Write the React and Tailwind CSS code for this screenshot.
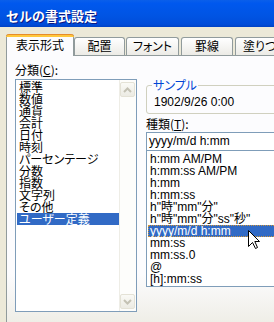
import React from "react";

const categories = [
  "標準",
  "数値",
  "通貨",
  "会計",
  "日付",
  "時刻",
  "パーセンテージ",
  "分数",
  "指数",
  "文字列",
  "その他",
  "ユーザー定義",
];

const formats = [
  "h:mm AM/PM",
  "h:mm:ss AM/PM",
  "h:mm",
  "h:mm:ss",
  'h"時"mm"分"',
  'h"時"mm"分"ss"秒"',
  "yyyy/m/d h:mm",
  "mm:ss",
  "mm:ss.0",
  "@",
  "[h]:mm:ss",
];

const ScrollButton = ({ down }) => (
  <div className="w-[15px] h-[15px] rounded-[2px] border border-[#E4E2D6] bg-gradient-to-b from-[#FAFAF6] to-[#ECEBE3] flex items-center justify-center">
    <svg width="9" height="6" viewBox="0 0 9 6" className={down ? "rotate-180" : ""}>
      <path d="M1 5 L4.5 1.5 L8 5" fill="none" stroke="#C4C2B4" strokeWidth="2" />
    </svg>
  </div>
);

const Tab = ({ label, active, className }) =>
  active ? (
    <div className={`relative z-10 -mb-[1px] h-[22px] rounded-t-[3px] border-x border-[#919B9C] bg-[#FCFCFE] ${className}`}>
      <div className="-mx-[1px] h-[3px] rounded-t-[3px] border-t border-[#E68B2C] bg-[#FFC83C]" />
      <div className="pt-[2px] text-center leading-[12px] whitespace-nowrap">{label}</div>
    </div>
  ) : (
    <div className={`h-[18px] rounded-t-[3px] border border-b-0 border-[#919B9C] bg-gradient-to-b from-white to-[#ECEBE6] ${className}`}>
      <div className="pt-[2px] leading-[12px] whitespace-nowrap">{label}</div>
    </div>
  );

const Cursor = () => (
  <svg width="13" height="20" viewBox="0 0 13 20" className="absolute left-[248px] top-[230px]">
    <path
      d="M0.5 0.5 V16.5 L4.5 12.5 L7.5 18.5 L9.5 17.5 L6.8 11.5 H11.5 Z"
      fill="white"
      stroke="black"
      strokeWidth="1"
      strokeLinejoin="miter"
    />
  </svg>
);

export default function App() {
  return (
    <div className="relative w-[274px] h-[322px] overflow-hidden bg-[#ECE9D8] text-[12px] text-black font-['Noto_Sans_CJK_JP',sans-serif]">
      {/* title bar */}
      <div className="h-[27px] pl-[6px] pt-[3px] flex items-center bg-[linear-gradient(to_bottom,#0A5FEA_0%,#0058EE_12%,#0054E3_60%,#004CD9_90%,#0042C4_100%)]">
        <span className="text-white font-bold text-[13px] leading-[13px] [text-shadow:1px_1px_0_#0A1883]">
          セルの書式設定
        </span>
      </div>

      <div className="flex h-[295px]">
        <div className="w-[3px] bg-[linear-gradient(to_right,#0831D9,#166AEE,#0855DD)]" />
        <div className="flex-1 flex flex-col pt-[7px]">
          {/* tabs */}
          <div className="flex items-end h-[21px] ml-[6px] [font-feature-settings:'palt']">
            <Tab label="表示形式" active className="w-[68px]" />
            <Tab label="配置" className="w-[51px] text-center" />
            <Tab label="フォント" className="ml-[1px] w-[53px] text-center" />
            <Tab label="罫線" className="ml-[2px] w-[52px] text-center" />
            <Tab label="塗りつぶし" className="ml-[2px] w-[70px] pl-[7px]" />
          </div>

          {/* panel */}
          <div className="flex-1 ml-[6px] flex pl-[8px] border-t border-l border-[#919B9C] bg-[linear-gradient(to_bottom,#FCFCFE_82%,#EFEEE7)]">
            {/* category column */}
            <div className="w-[122px] shrink-0">
              <div className="mt-[8px] h-[12px] leading-[12px]">
                分類(<span className="underline underline-offset-[1px]">C</span>):
              </div>
              <div className="mt-[3px] h-[233px] flex border border-[#7F9DB9] bg-white">
                <div className="flex-1 pl-[1px] pt-[1px] [font-feature-settings:'palt']">
                  {categories.map((c, i) => (
                    <div
                      key={c}
                      className={`h-[12px] leading-[12px] pl-[2px] whitespace-nowrap ${
                        i === categories.length - 1 ? "bg-[#316AC5] text-white" : ""
                      }`}
                    >
                      {c}
                    </div>
                  ))}
                </div>
                <div className="w-[17px] flex flex-col justify-between py-[2px] border-l border-[#EEEDE6] bg-[#FDFDFB]">
                  <ScrollButton />
                  <ScrollButton down />
                </div>
              </div>
            </div>

            {/* type column */}
            <div className="ml-[9px] w-[150px] shrink-0">
              <div className="relative mt-[29px] h-[29px] pl-[7px] pt-[10px] rounded-[3px] border border-[#D0D0BF] leading-[12px] font-['Liberation_Sans',sans-serif]">
                <span className="absolute -top-[7px] left-[5px] px-[1px] bg-[#FCFCFE] text-[#0046D5] leading-[12px] font-['Noto_Sans_CJK_JP',sans-serif] [font-feature-settings:'palt']">
                  サンプル
                </span>
                1902/9/26 0:00
              </div>
              <div className="mt-[4px] h-[12px] leading-[12px]">
                種類(<span className="underline underline-offset-[1px]">T</span>):
              </div>
              <div className="mt-[2px] h-[19px] pl-[2px] border border-[#7F9DB9] bg-white leading-[17px] font-['Liberation_Sans',sans-serif]">
                yyyy/m/d h:mm
              </div>
              <div className="h-[136px] pt-[2px] px-[1px] border border-t-0 border-[#7F9DB9] bg-white font-['Liberation_Sans','Noto_Sans_CJK_JP',sans-serif]">
                {formats.map((f, i) =>
                  i === 6 ? (
                    <div
                      key={f}
                      className="h-[12px] leading-[10px] pl-[1px] whitespace-nowrap border border-dotted border-[#CE953A] bg-[#316AC5] text-white"
                    >
                      {f}
                    </div>
                  ) : (
                    <div key={f} className="h-[12px] leading-[12px] pl-[2px] whitespace-nowrap">
                      {f}
                    </div>
                  )
                )}
              </div>
            </div>
          </div>
        </div>
      </div>

      <Cursor />
    </div>
  );
}
